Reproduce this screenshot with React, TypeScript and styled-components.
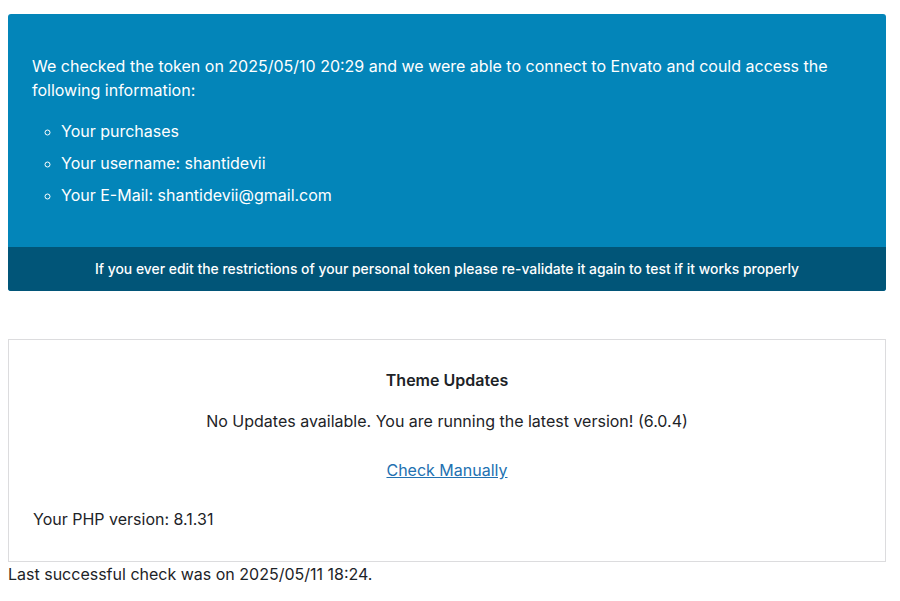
import React from "react";
import styled, { createGlobalStyle } from "styled-components";

const Global = createGlobalStyle`
  html, body { margin: 0; padding: 0; background: #fff; }
  body {
    font-family: Inter, "Noto Sans", "Liberation Sans", sans-serif;
    color: #1d2327;
    font-size: 16px;
  }
`;

const Page = styled.div`
  padding: 14px 14px 0 8px;
  display: flex;
  flex-direction: column;
`;

const Notice = styled.section`
  background: #0385b9;
  border-radius: 3px;
  overflow: hidden;
  color: #fff;
  display: flex;
  flex-direction: column;
`;

const NoticeBody = styled.div`
  padding: 40px 24px 40px 24px;
  font-size: 16px;
  line-height: 24px;
`;

const Para = styled.p`
  margin: 0;
`;

const List = styled.ul`
  margin: 17px 0 0 0;
  padding: 0 0 0 29px;
  list-style: circle;
  display: flex;
  flex-direction: column;
  gap: 8px;
  li { line-height: 24px; padding-left: 0; }
  li::marker { font-size: 14px; }
`;

const NoticeFooter = styled.div`
  background: #015578;
  height: 44px;
  display: flex;
  align-items: center;
  justify-content: center;
  font-size: 13.9px;
  font-weight: 500;
  color: #fff;
`;

const Spacer = styled.div<{ h: number }>`
  height: ${(p) => p.h}px;
`;

const UpdatesBox = styled.section`
  border: 1px solid #dcdcde;
  background: #fff;
  padding: 28px 24px 30px 24px;
  display: flex;
  flex-direction: column;
`;

const Title = styled.h3`
  margin: 0;
  text-align: center;
  font-size: 16px;
  font-weight: 600;
  line-height: 24px;
`;

const Center = styled.p<{ mt: number }>`
  margin: ${(p) => p.mt}px 0 0 0;
  text-align: center;
  line-height: 24px;
`;

const Link = styled.a`
  color: #2271b1;
  text-decoration: underline;
  cursor: pointer;
`;

const Left = styled.p<{ mt: number }>`
  margin: ${(p) => p.mt}px 0 0 0;
  line-height: 24px;
`;

const Footnote = styled.p`
  margin: 0;
  line-height: 24px;
`;

export default function App() {
  return (
    <>
      <Global />
      <Page>
        <Notice>
          <NoticeBody>
            <Para>
              We checked the token on 2025/05/10 20:29 and we were able to connect to Envato and could access the
              following information:
            </Para>
            <List>
              <li>Your purchases</li>
              <li>Your username: shantidevii</li>
              <li>Your E-Mail: shantidevii@gmail.com</li>
            </List>
          </NoticeBody>
          <NoticeFooter>
            If you ever edit the restrictions of your personal token please re-validate it again to test if it works properly
          </NoticeFooter>
        </Notice>
        <Spacer h={48} />
        <UpdatesBox>
          <Title>Theme Updates</Title>
          <Center mt={17}>No Updates available. You are running the latest version! (6.0.4)</Center>
          <Center mt={25}>
            <Link>Check Manually</Link>
          </Center>
          <Left mt={25}>Your PHP version: 8.1.31</Left>
        </UpdatesBox>
        <Footnote>Last successful check was on 2025/05/11 18:24.</Footnote>
      </Page>
    </>
  );
}
